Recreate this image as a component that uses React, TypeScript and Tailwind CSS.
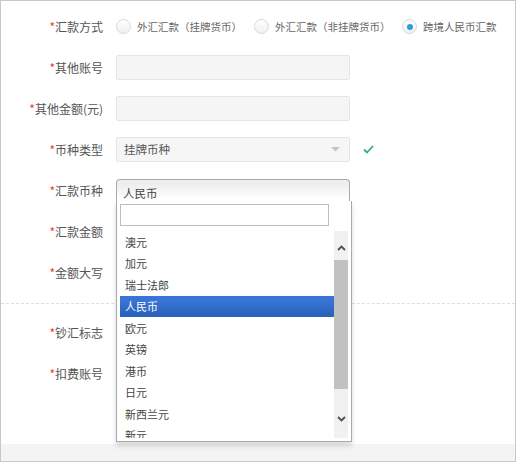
const currencies = [
  "澳元",
  "加元",
  "瑞士法郎",
  "人民币",
  "欧元",
  "英镑",
  "港币",
  "日元",
  "新西兰元",
  "新元",
];

function Label({ text }: { text: string }) {
  return (
    <div className="w-[102px] shrink-0 text-right text-[12px] text-[#555] whitespace-nowrap">
      <span className="text-[#e4393c]">*</span>
      {text}
    </div>
  );
}

function Row({ label, children }: { label: string; children?: React.ReactNode }) {
  return (
    <div className="flex h-[25px] items-center">
      <Label text={label} />
      <div className="ml-[13px] flex items-center">{children}</div>
    </div>
  );
}

function Radio({ checked, text, width }: { checked?: boolean; text: string; width: string }) {
  return (
    <div className={`flex items-center ${width}`}>
      <span className="flex h-[15px] w-[15px] items-center justify-center rounded-full border border-[#d9d9d9] bg-gradient-to-b from-white to-[#f0f0f0]">
        {checked && <span className="h-[6px] w-[6px] rounded-full bg-[#2d9be1]" />}
      </span>
      <span className="ml-[6px] text-[10.5px] text-[#666] whitespace-nowrap">{text}</span>
    </div>
  );
}

function Chevron({ up }: { up?: boolean }) {
  return (
    <svg width="9" height="6" viewBox="0 0 9 6">
      <polyline
        points={up ? "1,5 4.5,1.5 8,5" : "1,1 4.5,4.5 8,1"}
        fill="none"
        stroke="#505050"
        strokeWidth="1.8"
      />
    </svg>
  );
}

export default function App() {
  return (
    <div className="relative flex h-[462px] w-[516px] flex-col overflow-hidden border border-[#c8c8c8] bg-white font-['Noto_Sans_CJK_SC','Noto_Sans',sans-serif]">
      <div className="flex-1 pt-[13px]">
        <div className="flex flex-col gap-4">
          <Row label="汇款方式">
            <Radio text="外汇汇款（挂牌货币）" width="w-[138px]" />
            <Radio text="外汇汇款（非挂牌货币）" width="w-[148px]" />
            <Radio text="跨境人民币汇款" width="w-[110px]" checked />
          </Row>
          <Row label="其他账号">
            <div className="h-[25px] w-[234px] rounded-[2px] border border-[#e5e5e5] bg-[#f5f5f5]" />
          </Row>
          <Row label="其他金额(元)">
            <div className="h-[25px] w-[234px] rounded-[2px] border border-[#e5e5e5] bg-[#f5f5f5]" />
          </Row>
          <Row label="币种类型">
            <div className="flex h-[25px] w-[234px] items-center justify-between rounded-[2px] border border-[#e5e5e5] bg-[#f6f6f6] pl-[7px] pr-[9px]">
              <span className="text-[11.5px] text-[#555]">挂牌币种</span>
              <svg width="9" height="5" viewBox="0 0 9 5">
                <polygon points="0,0 9,0 4.5,4.5" fill="#c4c4c4" />
              </svg>
            </div>
            <svg className="ml-[13px]" width="11" height="9" viewBox="0 0 11 9">
              <polyline points="1,4.5 4,7.5 10,1" fill="none" stroke="#35a99a" strokeWidth="1.8" />
            </svg>
          </Row>
          <Row label="汇款币种">
            <div className="flex h-[24px] w-[234px] items-center rounded-t-[4px] border border-b-0 border-[#aaa] bg-gradient-to-b from-[#eee] from-20% to-white to-80% pl-[6px] pt-[6px]">
              <span className="text-[11.5px] text-[#444]">人民币</span>
            </div>
          </Row>
          <Row label="汇款金额" />
          <Row label="金额大写" />
        </div>
        <div className="mt-[18px] border-t border-dashed border-[#dedede]" />
        <div className="mt-4 flex flex-col gap-4">
          <Row label="钞汇标志" />
          <Row label="扣费账号" />
        </div>
      </div>
      <div className="h-[17px] bg-[#f4f4f4]" />

      <div className="absolute left-[115px] top-[200px] flex h-[241px] w-[236px] flex-col border border-t-0 border-[#aaa] bg-white px-[3px] pt-[3px] pb-[2px] shadow-[0_4px_5px_rgba(0,0,0,0.15)]">
        <div className="h-[22px] w-[209px] border border-[#bdbdbd] bg-white" />
        <div className="mt-[5px] flex h-[207px]">
          <div className="flex-1 overflow-hidden">
            {currencies.map((c) => (
              <div
                key={c}
                className={`flex h-[21.5px] items-center pl-[5px] text-[11px] ${
                  c === "人民币"
                    ? "bg-gradient-to-b from-[#3875d7] from-20% to-[#2a62bc] to-90% text-white"
                    : "text-[#444]"
                }`}
              >
                {c}
              </div>
            ))}
          </div>
          <div className="flex w-[14px] flex-col bg-[#f1f1f1]">
            <div className="flex h-[29px] items-center justify-center pt-[5px]">
              <Chevron up />
            </div>
            <div className="h-[129px] bg-[#c1c1c1]" />
            <div className="flex flex-1 items-center justify-center pt-[11px]">
              <Chevron />
            </div>
          </div>
        </div>
      </div>
    </div>
  );
}
